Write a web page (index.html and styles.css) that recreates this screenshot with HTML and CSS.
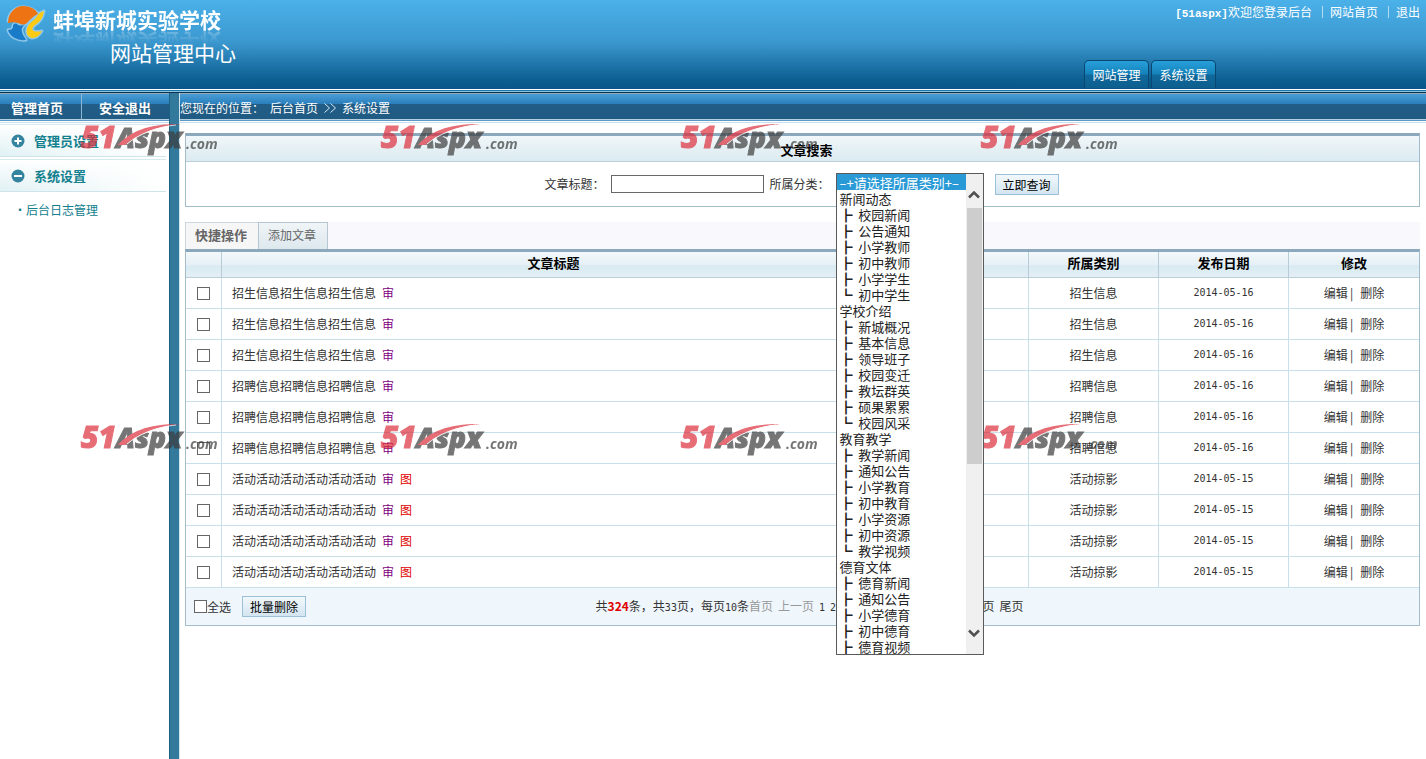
FILE: index.html
```html
<!DOCTYPE html>
<html lang="zh-CN">
<head>
  <meta charset="UTF-8">
  <title>网站管理中心</title>
  <link rel="stylesheet" href="styles.css">
</head>
<body>

<!-- Header -->
<header class="header">
  <div class="brand">
    <svg class="logo" viewBox="0 0 42 42" width="42" height="42">
      <g fill="#bfe2f7" stroke="#bfe2f7" stroke-width="3" stroke-linejoin="round" opacity="0.6">
        <path d="M3 19C4 10 11 5 18 5c7 0 12 3 15 7-5 2-8 6-11 9-4 3-6 0-9-2-3-1-6-1-10 0z"/>
        <path d="M39 9c-1 7-4 11-9 14-5 4-3 8 7 6-3 5-6 7-10 7-5-1-7-6-4-12 3-5 6-5 9-10 2-3 4-4 7-5z"/>
        <path d="M3 28c3 0 5-1 5-4 0-2 2-3 4-2 2 2 5 2 8 0-3 3-4 5-3 8 1 4 3 5 4 8-8 1-16-3-18-10z"/>
      </g>
      <path d="M3 21C3 10 11 4 18 4c7 0 13 3 15 8-5 2-8 6-11 9-4 3-6 1-9 0-3-1-6-1-10 0z" fill="#ee7413"/>
      <path d="M3 28c3 0 5-1 5-4 0-2 2-3 4-2 2 2 5 2 8 0-3 3-4 5-3 8 1 4 3 5 4 8-8 1-16-3-18-10z" fill="#1a7cc8"/>
      <path d="M39 9c-1 7-4 11-9 14-5 4-3 8 7 6-3 5-6 7-10 7-5-1-7-6-4-12 3-5 6-5 9-10 2-3 4-4 7-5z" fill="#fbcb14"/>
    </svg>
    <div class="titles">
      <div class="school">蚌埠新城实验学校</div>
      <h1>网站管理中心</h1>
    </div>
  </div>
  <div class="header-right">
    <div class="user-links">
      <span><b>[51aspx]</b>欢迎您登录后台</span>
      <a href="#">网站首页</a>
      <a href="#">退出</a>
    </div>
    <nav class="main-nav">
      <a href="#">网站管理</a>
      <a href="#">系统设置</a>
    </nav>
  </div>
</header>

<div class="workspace">
  <!-- Sidebar -->
  <aside class="sidebar">
    <div class="bar side-bar">
      <a href="#">管理首页</a>
      <a href="#">安全退出</a>
    </div>
    <a class="group" href="#">
      <svg width="14" height="14" viewBox="0 0 14 14"><circle cx="7" cy="7" r="6.5" fill="#35849f"/><path d="M3.5 7h7M7 3.5v7" stroke="#fff" stroke-width="2"/></svg>
      管理员设置
    </a>
    <a class="group" href="#">
      <svg width="14" height="14" viewBox="0 0 14 14"><circle cx="7" cy="7" r="6.5" fill="#35849f"/><path d="M3 7h8" stroke="#fff" stroke-width="2"/></svg>
      系统设置
    </a>
    <a class="sub" href="#">后台日志管理</a>
  </aside>

  <div class="splitter"></div>

  <!-- Main -->
  <main class="main">
    <div class="bar crumbs">
      <span>您现在的位置：</span>
      <a href="#">后台首页</a>
      <svg width="12" height="10" viewBox="0 0 12 10"><path d="M.5 .5l5 4.500-5 4.500M6.500 .5l5 4.500-5 4.500" fill="none" stroke="#d6ebf7"/></svg>
      <a href="#">系统设置</a>
    </div>

    <div class="content">
      <section class="search">
        <h2>文章搜索</h2>
        <form class="search-form">
          <label for="keyword">文章标题：</label>
          <input type="text" id="keyword">
          <label for="category">所属分类：</label>
          <div class="category">
            <div class="popup">
              <select id="category" size="30"></select>
              <div class="scroll">
                <svg width="12" height="8" viewBox="0 0 12 8"><path d="M1 6.500l5-5 5 5" fill="none" stroke="#505050" stroke-width="2.500"/></svg>
                <div class="thumb"></div>
                <svg width="12" height="8" viewBox="0 0 12 8"><path d="M1 1.500l5 5 5-5" fill="none" stroke="#505050" stroke-width="2.500"/></svg>
              </div>
            </div>
          </div>
          <button type="button">立即查询</button>
        </form>
      </section>

      <div class="tabs">
        <strong>快捷操作</strong>
        <a href="#">添加文章</a>
      </div>

      <table class="list">
        <colgroup>
          <col class="c-check"><col><col class="c-blank"><col class="c-side"><col class="c-side"><col class="c-side">
        </colgroup>
        <thead>
          <tr><th></th><th class="wide">文章标题</th><th class="open"></th><th>所属类别</th><th>发布日期</th><th>修改</th></tr>
        </thead>
        <tbody id="rows"></tbody>
      </table>

      <div class="list-foot">
        <label class="all"><input type="checkbox">全选</label>
        <button type="button">批量删除</button>
        <div class="pager">
          <span>共<b>324</b>条，共<span class="num">33</span>页，每页<span class="num">10</span>条<span class="off">首页</span></span>
          <span class="off">上一页</span>
          <a class="num" href="#">1</a>
          <a class="num" href="#">2</a>
          <a class="num" href="#">3</a>
          <a class="num" href="#">4</a>
          <a class="num" href="#">5</a>
          <a class="num" href="#">6</a>
          <a class="num" href="#">7</a>
          <a class="num" href="#">8</a>
          <a class="num" href="#">9</a>
          <a class="num" href="#">10</a>
          <a class="num" href="#">...</a>
          <a href="#">下一页</a>
          <a href="#">尾页</a>
        </div>
      </div>
    </div>
  </main>
</div>

<!-- Watermark -->
<div class="marks" id="marks"></div>

<script>
  const groups = [
    ["新闻动态", ["校园新闻", "公告通知", "小学教师", "初中教师", "小学学生", "初中学生"]],
    ["学校介绍", ["新城概况", "基本信息", "领导班子", "校园变迁", "教坛群英", "硕果累累", "校园风采"]],
    ["教育教学", ["教学新闻", "通知公告", "小学教育", "初中教育", "小学资源", "初中资源", "教学视频"]],
    ["德育文体", ["德育新闻", "通知公告", "小学德育", "初中德育", "德育视频"]]
  ];

  const articles = [
    { word: "招生信息", times: 3, type: "招生信息", date: "2014-05-16", count: 3 },
    { word: "招聘信息", times: 3, type: "招聘信息", date: "2014-05-16", count: 3 },
    { word: "活动", times: 6, type: "活动掠影", date: "2014-05-15", count: 4, image: true }
  ];

  // Category list
  let options = "<option selected>–+请选择所属类别+–</option>";
  groups.forEach(([name, items], g) => {
    options += `<option>${name}</option>`;
    items.forEach((item, i) => {
      const last = i === items.length - 1 && g < groups.length - 1;
      options += `<option>${last ? "┗" : "┣"}&nbsp;&nbsp;${item}</option>`;
    });
  });
  document.getElementById("category").innerHTML = options;

  // Article rows
  let rows = "";
  articles.forEach(a => {
    for (let i = 0; i < a.count; i++) {
      rows += `
        <tr>
          <td><input type="checkbox" aria-label="选择"></td>
          <td class="title"><a href="#">${a.word.repeat(a.times)}</a><span class="checked">审</span>${a.image ? '<span class="image">图</span>' : ""}</td>
          <td class="open"></td>
          <td>${a.type}</td>
          <td class="num">${a.date}</td>
          <td><a href="#">编辑</a><span class="sep">|</span><a href="#">删除</a></td>
        </tr>`;
    }
  });
  document.getElementById("rows").innerHTML = rows;

  // Watermark tiles
  const mark = `
    <svg width="142" height="34" viewBox="0 0 142 34">
      <text class="mark-red" x="1" y="25">51</text>
      <text class="mark-grey" x="36" y="25">Aspx</text>
      <text class="mark-com" x="106" y="26">.com</text>
      <path d="M38 22C50 9 66 1 100 1 76 4 58 11 45 22z" fill="#dc2f3c"/>
      <path d="M47 21C59 11 76 4 96 2" fill="none" stroke="#fff"/>
    </svg>`;
  document.getElementById("marks").innerHTML = mark.repeat(8);
</script>

</body>
</html>
```
FILE: styles.css
```css
* {
  box-sizing: border-box;
}
body {
  margin: 0;
  min-height: 100vh;
  display: flex;
  flex-direction: column;
  position: relative;
  background: #fff;
  color: #333;
  font-family: "Noto Sans CJK SC", sans-serif;
  font-size: 12px;
  line-height: 16px;
}
a {
  color: inherit;
  text-decoration: none;
}
input, button, select {
  font-family: inherit;
  font-size: 12px;
}

/* header */
.header {
  height: 93px;
  display: flex;
  justify-content: space-between;
  color: #fff;
  background:
    linear-gradient(#fff 1px, #1c78ac 1px, #1c78ac 2px, #8cc4de 2px, #8cc4de 3px, #0a3252 3px) 0 89px / 100% 4px no-repeat,
    linear-gradient(#4bb1e9, #3b98cf 42px, #0c5e90 80px, #07568a 89px);
}
.brand {
  display: flex;
  padding: 2px 0 0 5px;
}
.titles {
  padding-left: 6px;
}
.school {
  font-size: 21px;
  font-weight: 700;
  line-height: 34px;
  height: 38px;
  -webkit-box-reflect: below -18px linear-gradient(transparent 45%, rgba(255,255,255,0.3) 80%);
}
.titles h1 {
  margin: 0 0 0 57px;
  font-size: 21px;
  font-weight: 400;
  line-height: 24px;
}
.header-right {
  display: flex;
  flex-direction: column;
  justify-content: space-between;
  align-items: flex-end;
  padding: 4px 6px 5px 0;
}
.user-links {
  display: flex;
}
.user-links b {
  font-family: "Liberation Mono", monospace;
  font-size: 11px;
}
.user-links a {
  position: relative;
  margin-left: 18px;
}
.user-links a::before {
  content: "";
  position: absolute;
  left: -8px;
  top: 2px;
  width: 1px;
  height: 12px;
  background: #b5dcf3;
}
.main-nav {
  display: flex;
  gap: 2px;
  margin-right: 204px;
}
.main-nav a {
  width: 65px;
  height: 28px;
  line-height: 28px;
  text-align: center;
  border: 1px solid #0a4770;
  border-bottom: 0;
  border-radius: 5px 5px 0 0;
  background: linear-gradient(#27a0da, #1682ba 13px, #10699c 14px, #0d5e8d);
}

/* workspace */
.workspace {
  flex: 1;
  display: flex;
}
.bar {
  height: 30px;
  display: flex;
  padding-bottom: 1px;
  color: #fff;
  background: linear-gradient(#8fa8b8 1px, #4a9dd6 1px, #2a7fbb 11px, #215d86 11px, #205b84 26px, #b3cfe0 26px, #b3cfe0 27px, #5b98c3 27px, #5b98c3 28px, #fff 28px, #fff 29px, #c5dfee 29px);
}
.sidebar {
  width: 169px;
}
.side-bar a {
  font-size: 13px;
  font-weight: 700;
  line-height: 30px;
  padding-left: 11px;
}
.side-bar a + a {
  margin-left: 18px;
  padding-left: 17px;
  border-left: 1px solid #8db6d2;
  height: 26px;
}
.group {
  display: flex;
  align-items: center;
  gap: 9px;
  height: 33px;
  margin: 1px 3px 2px 0;
  padding-left: 11px;
  border-top: 1px solid #d5e9ef;
  border-bottom: 1px solid #cfe4ea;
  background: linear-gradient(to right, #fff0, #fff 98%), linear-gradient(#fff, #e0f1f4);
  color: #12808e;
  font-size: 13px;
  font-weight: 700;
}
.sub {
  display: block;
  padding: 8px 0 0 14px;
  color: #12808e;
}
.sub::before {
  content: "·";
}
.splitter {
  width: 11px;
  background: #33799c;
  border-left: 1px solid #1e5f84;
  border-right: 1px solid #d3e4ec;
}
.main {
  flex: 1;
  min-width: 0;
}
.crumbs {
  align-items: center;
  gap: 6px;
}
.content {
  padding: 10px 6px 0 5px;
}

/* search */
.search {
  border: 1px solid #a3bccb;
  border-top: 3px solid #8ba8bc;
}
.search h2 {
  margin: 0;
  padding: 6px 0 3px 8px;
  border-bottom: 1px solid #bccfd8;
  background: linear-gradient(#f1f7fa, #e5f0f4 50%, #dcebf2);
  color: #000;
  font-size: 13px;
  line-height: 16px;
  text-align: center;
}
.search-form {
  display: flex;
  justify-content: center;
  align-items: center;
  gap: 6px;
  height: 44px;
  padding-right: 2px;
}
.search-form input {
  width: 153px;
  height: 18px;
  border: 1px solid #686868;
}
.search-form button {
  margin-left: 5px;
}
button {
  width: 64px;
  height: 21px;
  padding: 0;
  border: 1px solid #9cc0d8;
  background: linear-gradient(#f2f8fc, #d3e5f1);
  color: #000;
  line-height: 17px;
}
.category {
  position: relative;
  width: 148px;
  height: 22px;
}
.popup {
  position: absolute;
  z-index: 5;
  top: 0;
  left: 0;
  width: 148px;
  display: flex;
  border: 1px solid #5a5a5a;
  background: #fff;
}
.popup select {
  flex: 1;
  min-width: 0;
  height: 480px;
  padding: 0;
  border: 0;
  border-radius: 0;
  outline: 0;
  overflow: hidden;
  background: #fff;
}
.popup option {
  display: flex;
  align-items: center;
  height: 16px;
  min-height: 16px;
  padding: 0 0 0 3px;
  color: #222;
  font-size: 13px;
}
.popup option:checked {
  background: #2a9ad6 linear-gradient(#2a9ad6, #2a9ad6);
  color: #fff;
}
.scroll {
  width: 17px;
  display: flex;
  flex-direction: column;
  align-items: center;
  padding: 17px 0;
  background: #f0f0f0;
}
.scroll svg:last-child {
  margin-top: auto;
}
.thumb {
  width: 15px;
  height: 256px;
  margin-top: 9px;
  background: #cdcdcd;
}

/* list */
.tabs {
  display: flex;
  margin-top: 15px;
  background: #f9f9fd;
  color: #666;
  line-height: 24px;
}
.tabs strong, .tabs a {
  height: 27px;
  border: 1px solid #ccd8de;
  border-bottom: 0;
}
.tabs strong {
  width: 73px;
  padding-left: 9px;
  border-right: 0;
  background: #f6f6f6;
  font-size: 13px;
}
.tabs a {
  width: 70px;
  padding-left: 9px;
  border-color: #b5c6d0;
  background: linear-gradient(#f0f4f7, #dde8ee);
}
.list {
  width: 100%;
  table-layout: fixed;
  border-collapse: separate;
  border-spacing: 0;
  border: 1px solid #a3bccb;
  border-top: 3px solid #8ba8bc;
  border-bottom: 0;
}
.c-check {
  width: 36px;
}
.c-blank {
  width: 144px;
}
.c-side {
  width: 130px;
}
.list th {
  height: 26px;
  padding: 0 0 3px;
  border-right: 1px solid #b8ccd7;
  border-bottom: 1px solid #bccfd8;
  background: linear-gradient(#f3f8fb, #e6f0f5 50%, #d9eaf2 55%, #e3eff5);
  color: #000;
  font-size: 13px;
}
.list td {
  height: 31px;
  padding: 0;
  border-right: 1px solid #c9dfea;
  border-bottom: 1px solid #c9dfea;
  text-align: center;
}
.list th:last-child, .list td:last-child, .list .wide, .list .title {
  border-right: 0;
}
.list .title {
  padding-left: 10px;
  text-align: left;
}
.list .title span {
  margin-left: 6px;
}
.list .checked {
  color: #800080;
}
.list .image {
  color: #e00000;
}
.list .sep {
  margin: 0 7px 0 2px;
}
.num {
  font-family: "DejaVu Sans Mono", monospace;
  font-size: 10px;
}
input[type="checkbox"] {
  appearance: none;
  display: block;
  width: 13px;
  height: 13px;
  margin: 0 auto;
  border: 1px solid #666;
  background: #fff;
}
.list-foot {
  display: flex;
  align-items: center;
  height: 38px;
  padding-left: 8px;
  border: 1px solid #a3bccb;
  border-top: 0;
  background: #eff7fd;
}
.all {
  display: flex;
  align-items: center;
  margin-right: 11px;
}
.pager {
  flex: 1;
  display: flex;
  justify-content: center;
  align-items: baseline;
  gap: 5px;
  padding-right: 106px;
}
.pager b {
  color: #e00000;
}
.pager .off {
  color: #999;
}

/* watermark */
.marks {
  position: absolute;
  top: 123px;
  left: 80px;
  display: grid;
  grid-template-columns: repeat(4, 300px);
  grid-auto-rows: 300px;
  opacity: 0.7;
  pointer-events: none;
}
.marks svg {
  overflow: visible;
}
.mark-red, .mark-grey {
  font-family: "Open Sans", sans-serif;
  font-size: 30px;
  font-style: italic;
  font-weight: 800;
  stroke-width: 1px;
}
.mark-red {
  fill: #dc2f3c;
  stroke: #dc2f3c;
}
.mark-grey {
  font-size: 28px;
  fill: #3c3c3c;
  stroke: #3c3c3c;
}
.mark-com {
  font-family: "Open Sans", sans-serif;
  font-size: 14px;
  font-style: italic;
  font-weight: 700;
  fill: #3c3c3c;
}
```
